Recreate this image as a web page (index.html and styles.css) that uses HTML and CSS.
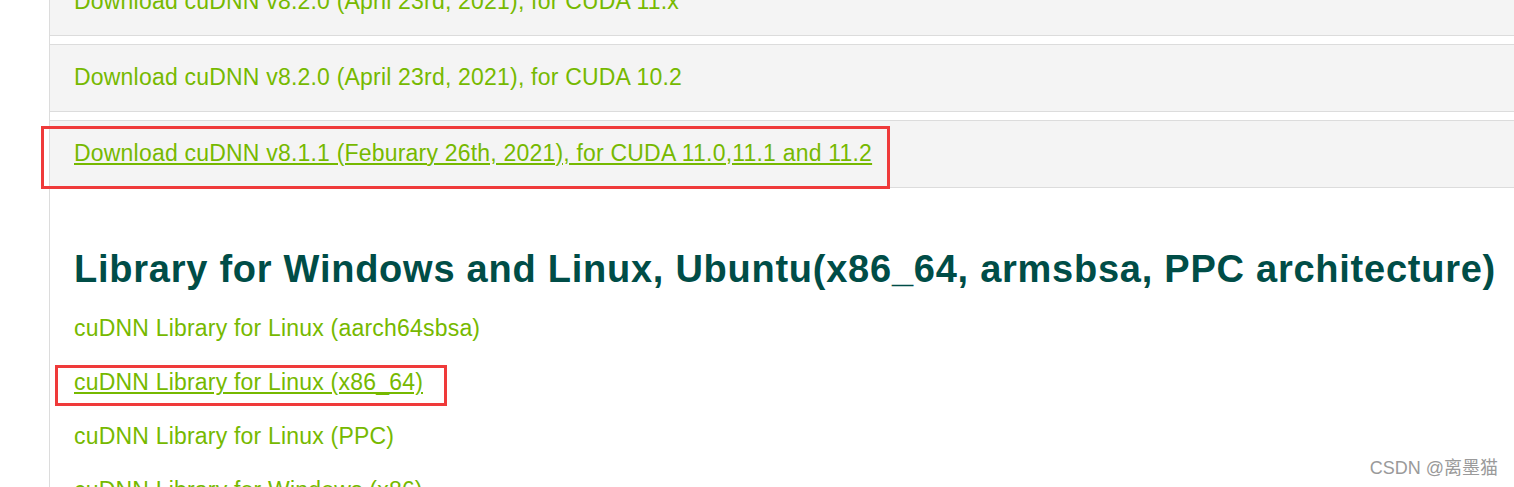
FILE: index.html
```html
<!DOCTYPE html>
<html>
<head>
<meta charset="utf-8">
<link rel="stylesheet" href="styles.css">
</head>
<body>
<div class="page">
  <div class="column">
    <div class="panel"><a class="dl">Download cuDNN v8.2.0 (April 23rd, 2021), for CUDA 11.x</a></div>
    <div class="panel"><a class="dl">Download cuDNN v8.2.0 (April 23rd, 2021), for CUDA 10.2</a></div>
    <div class="panel"><a class="dl active">Download cuDNN v8.1.1 (Feburary 26th, 2021), for CUDA 11.0,11.1 and 11.2</a></div>
    <div class="library">
      <h2 class="title">Library for Windows and Linux, Ubuntu(x86_64, armsbsa, PPC architecture)</h2>
      <ul class="links">
        <li><a class="lib">cuDNN Library for Linux (aarch64sbsa)</a></li>
        <li><a class="lib active">cuDNN Library for Linux (x86_64)</a></li>
        <li><a class="lib">cuDNN Library for Linux (PPC)</a></li>
        <li><a class="lib">cuDNN Library for Windows (x86)</a></li>
      </ul>
    </div>
  </div>
  <div class="mark mark-a"></div>
  <div class="mark mark-b"></div>
  <div class="watermark">CSDN @离墨猫</div>
</div>
</body>
</html>
```
FILE: styles.css
```css
html, body {
  margin: 0;
  padding: 0;
  background: #ffffff;
  overflow: hidden;
}
.page {
  position: relative;
  width: 1514px;
  height: 487px;
  overflow: hidden;
  font-family: "Liberation Sans", Arial, sans-serif;
}
.column {
  margin-left: 49px;
  margin-top: -32px;
  width: 1600px;
  border-left: 1px solid #dcdcdc;
  min-height: 600px;
  display: flex;
  flex-direction: column;
  gap: 8px;
}
.panel {
  margin-left: -1px;
  height: 64px;
  padding-bottom: 2px;
  border: 1px solid #dcdcdc;
  background: #f4f4f4;
  display: flex;
  align-items: center;
  padding-left: 24px;
  font-size: 23px;
}
.dl, .lib {
  color: #76b900;
  font-size: 23px;
  text-decoration: none;
  letter-spacing: 0.2px;
}
.active {
  text-decoration: underline;
  text-decoration-thickness: 2px;
  text-underline-offset: 2px;
}
.library {
  padding-left: 24px;
  padding-top: 50px;
}
.title {
  margin: 0;
  color: #004d47;
  font-size: 38px;
  font-weight: 700;
  letter-spacing: 0.75px;
  line-height: 46px;
}
.links {
  list-style: none;
  margin: 24px 0 0;
  padding: 0;
  display: flex;
  flex-direction: column;
  gap: 30px;
  font-size: 23px;
}
.links li {
  line-height: 24px;
}
.mark {
  position: absolute;
  border: 3px solid #ef3a3a;
  box-sizing: border-box;
}
.mark-a {
  left: 41px;
  top: 126px;
  width: 849px;
  height: 63px;
}
.mark-b {
  left: 55px;
  top: 365px;
  width: 392px;
  height: 41px;
}
.watermark {
  position: absolute;
  right: 16px;
  bottom: 8px;
  font-family: "Liberation Sans", "Noto Sans CJK SC", sans-serif;
  font-size: 18px;
  color: #9a9a9a;
  text-shadow: 0 0 1px #ffffff;
}
```
